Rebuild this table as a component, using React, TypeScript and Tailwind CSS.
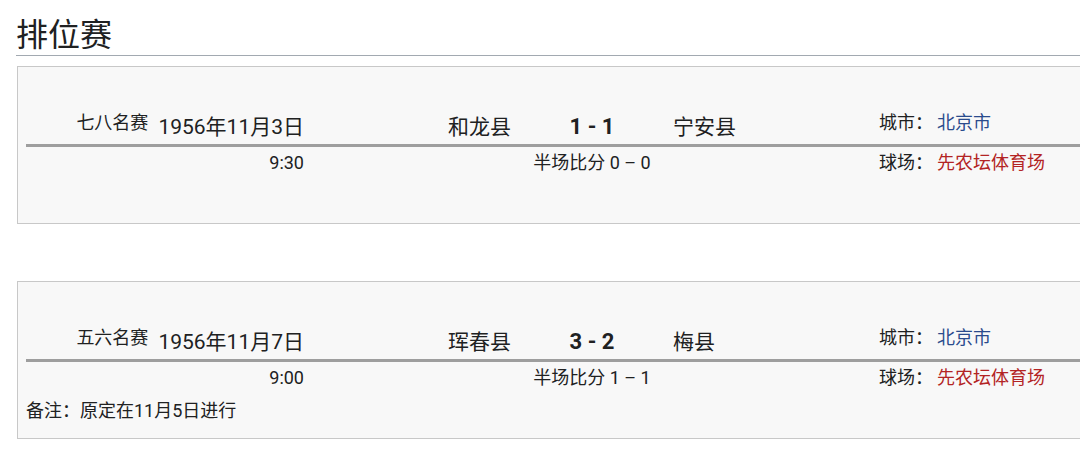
import React from "react";

const FONT = "font-['Roboto','Noto_Sans_CJK_SC',sans-serif]";

type Match = {
  label: string;
  date: string;
  time: string;
  home: string;
  score: string;
  away: string;
  half: string;
  note?: string;
};

const matches: Match[] = [
  {
    label: "七八名赛",
    date: "1956年11月3日",
    time: "9:30",
    home: "和龙县",
    score: "1 - 1",
    away: "宁安县",
    half: "半场比分 0 – 0",
  },
  {
    label: "五六名赛",
    date: "1956年11月7日",
    time: "9:00",
    home: "珲春县",
    score: "3 - 2",
    away: "梅县",
    half: "半场比分 1 – 1",
    note: "备注：原定在11月5日进行",
  },
];

function MatchBox({ m, className }: { m: Match; className?: string }) {
  return (
    <div
      className={`ml-[17px] w-[1100px] h-[158px] border border-[#c8c8c8] bg-[#f8f8f8] pl-[8px] text-[#202122] ${className ?? ""}`}
    >
      <div className="flex items-end h-[80px] border-b-[3px] border-[#9e9e9e] pb-[5px]">
        <div className="w-[278px] flex justify-end items-end gap-[10px]">
          <span className="text-[18px] leading-[24px] mb-[4px]">{m.label}</span>
          <span className="text-[21px] leading-[24px]">{m.date}</span>
        </div>
        <div className="w-[207px] text-right text-[21px] leading-[24px]">{m.home}</div>
        <div className="w-[162px] text-center text-[22px] leading-[24px] font-bold whitespace-pre">{m.score.replace(/ /g, "\u00a0")}</div>
        <div className="w-[206px] text-left text-[21px] leading-[24px]">{m.away}</div>
        <div className="flex text-[18px] leading-[24px] mb-[4px]">
          <span className="w-[58px]">城市：</span>
          <span className="text-[#2a4b8d]">北京市</span>
        </div>
      </div>
      <div className="flex pt-[4px] text-[18px] leading-[24px]">
        <div className="w-[278px] text-right">{m.time}</div>
        <div className="w-[207px]" />
        <div className="w-[162px] text-center whitespace-nowrap">{m.half}</div>
        <div className="w-[206px]" />
        <div className="flex">
          <span className="w-[58px]">球场：</span>
          <span className="text-[#b32424]">先农坛体育场</span>
        </div>
      </div>
      {m.note && (
        <div className="pt-[9px] text-[18px] leading-[24px]">{m.note}</div>
      )}
    </div>
  );
}

export default function App() {
  return (
    <div className={`w-[1080px] h-[468px] overflow-hidden bg-white ${FONT}`}>
      <div className="ml-[16px] w-[1100px] pt-[12px] pb-[3px] border-b border-[#a2a9b1]">
        <h2 className="font-['Noto_Sans_CJK_SC',sans-serif] text-[32px] leading-[40px] font-normal text-[#202122]">
          排位赛
        </h2>
      </div>
      <MatchBox m={matches[0]} className="mt-[10px]" />
      <MatchBox m={matches[1]} className="mt-[57px]" />
    </div>
  );
}
